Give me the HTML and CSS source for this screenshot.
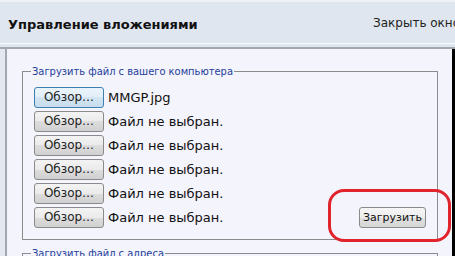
FILE: index.html
```html
<!DOCTYPE html>
<html lang="ru">
<head>
    <meta charset="UTF-8">
    <meta name="viewport" content="width=device-width, initial-scale=1.0">
    <title>Управление вложениями</title>
    <link rel="stylesheet" href="styles.css">
</head>
<body>
    <div class="header">
        <div class="title">Управление вложениями</div>
        <div class="close">Закрыть окно</div>
    </div>
    <div class="strip"></div>

    <div class="panel">
        <!-- Upload from computer -->
        <fieldset class="group">
            <legend>Загрузить файл с вашего компьютера</legend>
            <div class="files">
                <div class="row"><span class="browse active">Обзор…</span><span class="fname">MMGP.jpg</span></div>
                <div class="row"><span class="browse">Обзор…</span><span class="fname">Файл не выбран.</span></div>
                <div class="row"><span class="browse">Обзор…</span><span class="fname">Файл не выбран.</span></div>
                <div class="row"><span class="browse">Обзор…</span><span class="fname">Файл не выбран.</span></div>
                <div class="row"><span class="browse">Обзор…</span><span class="fname">Файл не выбран.</span></div>
                <div class="row"><span class="browse">Обзор…</span><span class="fname">Файл не выбран.</span></div>
            </div>
            <button class="upload">Загрузить</button>
        </fieldset>

        <!-- Upload from url -->
        <fieldset class="group next">
            <legend>Загрузить файл с адреса</legend>
        </fieldset>
    </div>

    <div class="mark"></div>
</body>
</html>
```

FILE: styles.css
```css
body {
    margin: 0;
    height: 256px;
    overflow: hidden;
    position: relative;
    background-color: #e4e9f1;
    font-family: "DejaVu Sans", Verdana, sans-serif;
    color: #111;
}

.header {
    display: flex;
    align-items: center;
    height: 41px;
    padding-left: 8px;
    background-color: #dfe6ef;
    border-top: 2px solid #eef2f7;
    border-bottom: 1px solid #fbfcfd;
    overflow: hidden;
    white-space: nowrap;
}

.title {
    flex: 1;
    font-size: 13px;
    font-weight: bold;
    padding-top: 4px;
}

.close {
    font-size: 12px;
    color: #222;
    margin-right: -6px;
    width: 88px;
    flex-shrink: 0;
}

.strip {
    height: 3px;
    background-color: #dfe6ef;
    border-bottom: 2px solid #a3a7af;
}

.panel {
    margin-left: 5px;
    height: 260px;
    padding: 16px 14px 0 15px;
    background-color: #f4f4fc;
    border-left: 2px solid #a3a7af;
    border-right: 3px solid #000;
}

.group {
    display: flex;
    align-items: flex-end;
    justify-content: space-between;
    margin: 0;
    padding: 9px 11px 11px 8px;
    border: 1px solid #8c8c8c;
}

.group legend {
    padding: 0 1px;
    font-family: "DejaVu Sans Condensed", "DejaVu Sans", sans-serif;
    font-size: 11px;
    line-height: 13px;
    color: #23409a;
}

.group.next {
    margin-top: 7px;
    height: 40px;
}

.files {
    display: flex;
    flex-direction: column;
    gap: 3px;
    margin-left: 3px;
}

.row {
    display: flex;
    align-items: center;
    height: 21px;
}

.browse {
    box-sizing: border-box;
    width: 70px;
    height: 21px;
    line-height: 19px;
    text-align: center;
    font-size: 12px;
    color: #222;
    border: 1px solid #8a8a8a;
    border-radius: 3px;
    background: linear-gradient(#f3f3f3, #ebebeb 50%, #dddddd 50%, #d0d0d0);
}

.browse.active {
    border-color: #3c7fb1;
    background: linear-gradient(#eaf4fb, #e2eef8 50%, #d2e4f2 50%, #c7dcec);
}

.fname {
    margin-left: 4px;
    font-size: 13px;
}

.upload {
    box-sizing: border-box;
    width: 67px;
    height: 21px;
    padding: 0;
    font-family: "DejaVu Sans", Verdana, sans-serif;
    font-size: 11px;
    color: #111;
    border: 1px solid #8a8a8a;
    border-radius: 3px;
    background: linear-gradient(#f6f6f6, #ededed 50%, #e0e0e0 50%, #d6d6d6);
}

.mark {
    position: absolute;
    left: 328px;
    top: 189px;
    width: 123px;
    height: 53px;
    box-sizing: border-box;
    border: 3px solid #e1232b;
    border-radius: 16px;
}
```
